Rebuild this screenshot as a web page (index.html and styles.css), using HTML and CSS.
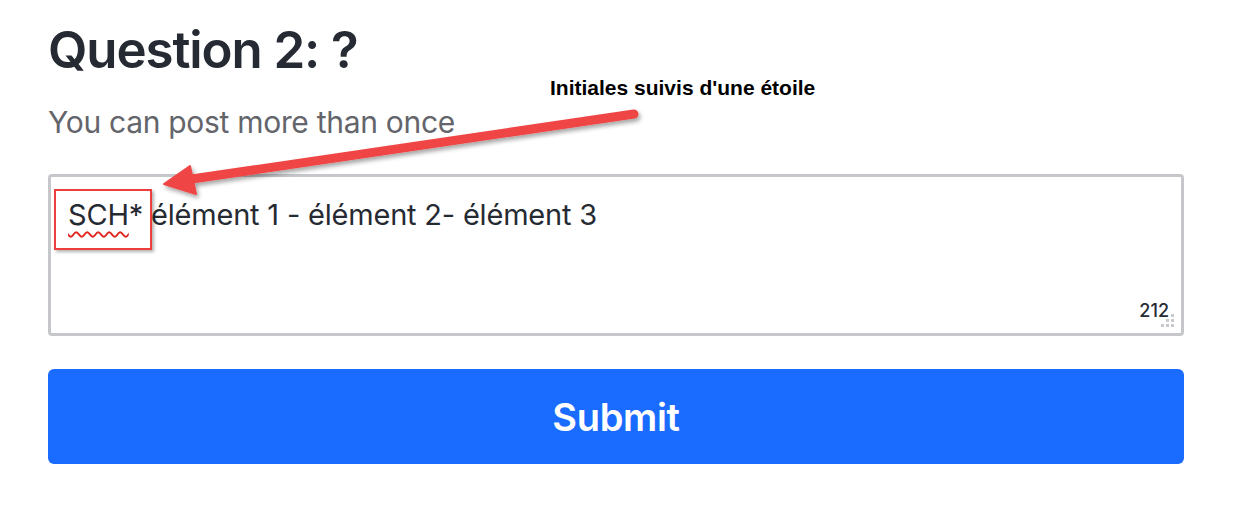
FILE: index.html
```html
<!DOCTYPE html>
<html>
<head>
<meta charset="utf-8">
<link rel="stylesheet" href="styles.css">
</head>
<body>
<main class="page">
  <h1 class="title">Question 2: ?</h1>
  <p class="subtitle">You can post more than once</p>
  <div class="field">
    <div class="field-text"><span class="misspelled">SCH</span>* élément 1 - élément 2- élément 3</div>
    <div class="field-foot">
      <span class="counter">212</span>
      <svg class="grip" width="14" height="14" viewBox="0 0 14 14">
        <rect x="10" y="0" width="3" height="3" fill="#c9cacd"/>
        <rect x="5" y="5" width="3" height="3" fill="#c9cacd"/>
        <rect x="10" y="5" width="3" height="3" fill="#c9cacd"/>
        <rect x="0" y="10" width="3" height="3" fill="#c9cacd"/>
        <rect x="5" y="10" width="3" height="3" fill="#c9cacd"/>
        <rect x="10" y="10" width="3" height="3" fill="#c9cacd"/>
      </svg>
    </div>
  </div>
  <button class="submit">Submit</button>

  <div class="note">Initiales suivis d'une étoile</div>
  <div class="highlight"></div>
  <svg class="arrow" width="1238" height="516" viewBox="0 0 1238 516">
    <defs>
      <filter id="sh" x="-10%" y="-50%" width="120%" height="200%">
        <feDropShadow dx="2" dy="3" stdDeviation="2" flood-color="#000" flood-opacity="0.35"/>
      </filter>
    </defs>
    <g filter="url(#sh)" fill="#f04545" stroke="#f04545">
      <line x1="634" y1="114" x2="185" y2="180" stroke-width="9" stroke-linecap="round"/>
      <polygon points="164,184 190,166 196,194" stroke-width="2" stroke-linejoin="round"/>
    </g>
  </svg>
</main>
</body>
</html>
```
FILE: styles.css
```css
html, body {
  margin: 0;
  padding: 0;
  background: #ffffff;
}

.page {
  position: relative;
  width: 1136px;
  margin-left: 48px;
  padding-top: 18px;
  display: flex;
  flex-direction: column;
  font-family: Inter, "Noto Sans", sans-serif;
}

.title {
  margin: 0;
  font-size: 51px;
  line-height: 64px;
  font-weight: 600;
  color: #262a33;
  letter-spacing: -1.1px;
}

.subtitle {
  margin: 22px 0 0;
  font-size: 30px;
  line-height: 36px;
  font-weight: 400;
  color: #63656b;
  letter-spacing: -0.3px;
}

.field {
  margin-top: 34px;
  height: 162px;
  box-sizing: border-box;
  border: 3px solid #c6c7cb;
  border-radius: 4px;
  padding: 20px 6px 5px 17px;
  display: flex;
  flex-direction: column;
  justify-content: space-between;
}

.field-text {
  font-size: 29px;
  line-height: 36px;
  color: #262a33;
  letter-spacing: -0.2px;
}

.misspelled {
  text-decoration: underline wavy #e0261f;
  text-decoration-thickness: 1.5px;
  text-underline-offset: 6px;
}

.field-foot {
  display: flex;
  justify-content: flex-end;
  align-items: flex-end;
}

.counter {
  font-size: 18px;
  line-height: 20px;
  font-weight: 500;
  color: #262a33;
  margin-bottom: 7px;
  margin-right: -8px;
}

.grip {
  display: block;
}

.submit {
  margin-top: 33px;
  height: 95px;
  border: none;
  border-radius: 6px;
  background: #1a6bff;
  color: #ffffff;
  font-family: Inter, "Noto Sans", sans-serif;
  font-size: 38px;
  font-weight: 600;
  letter-spacing: -0.3px;
  cursor: pointer;
}

.note {
  position: absolute;
  left: 502px;
  top: 76px;
  font-family: "Liberation Sans", Arial, sans-serif;
  font-weight: bold;
  font-size: 21px;
  color: #000000;
  white-space: nowrap;
}

.highlight {
  position: absolute;
  left: 6px;
  top: 189px;
  width: 98px;
  height: 61px;
  border: 2px solid #ee3e3e;
  box-sizing: border-box;
  box-shadow: 2px 2px 3px rgba(0, 0, 0, 0.3);
}

.arrow {
  position: absolute;
  left: -48px;
  top: 0;
  pointer-events: none;
}
```
